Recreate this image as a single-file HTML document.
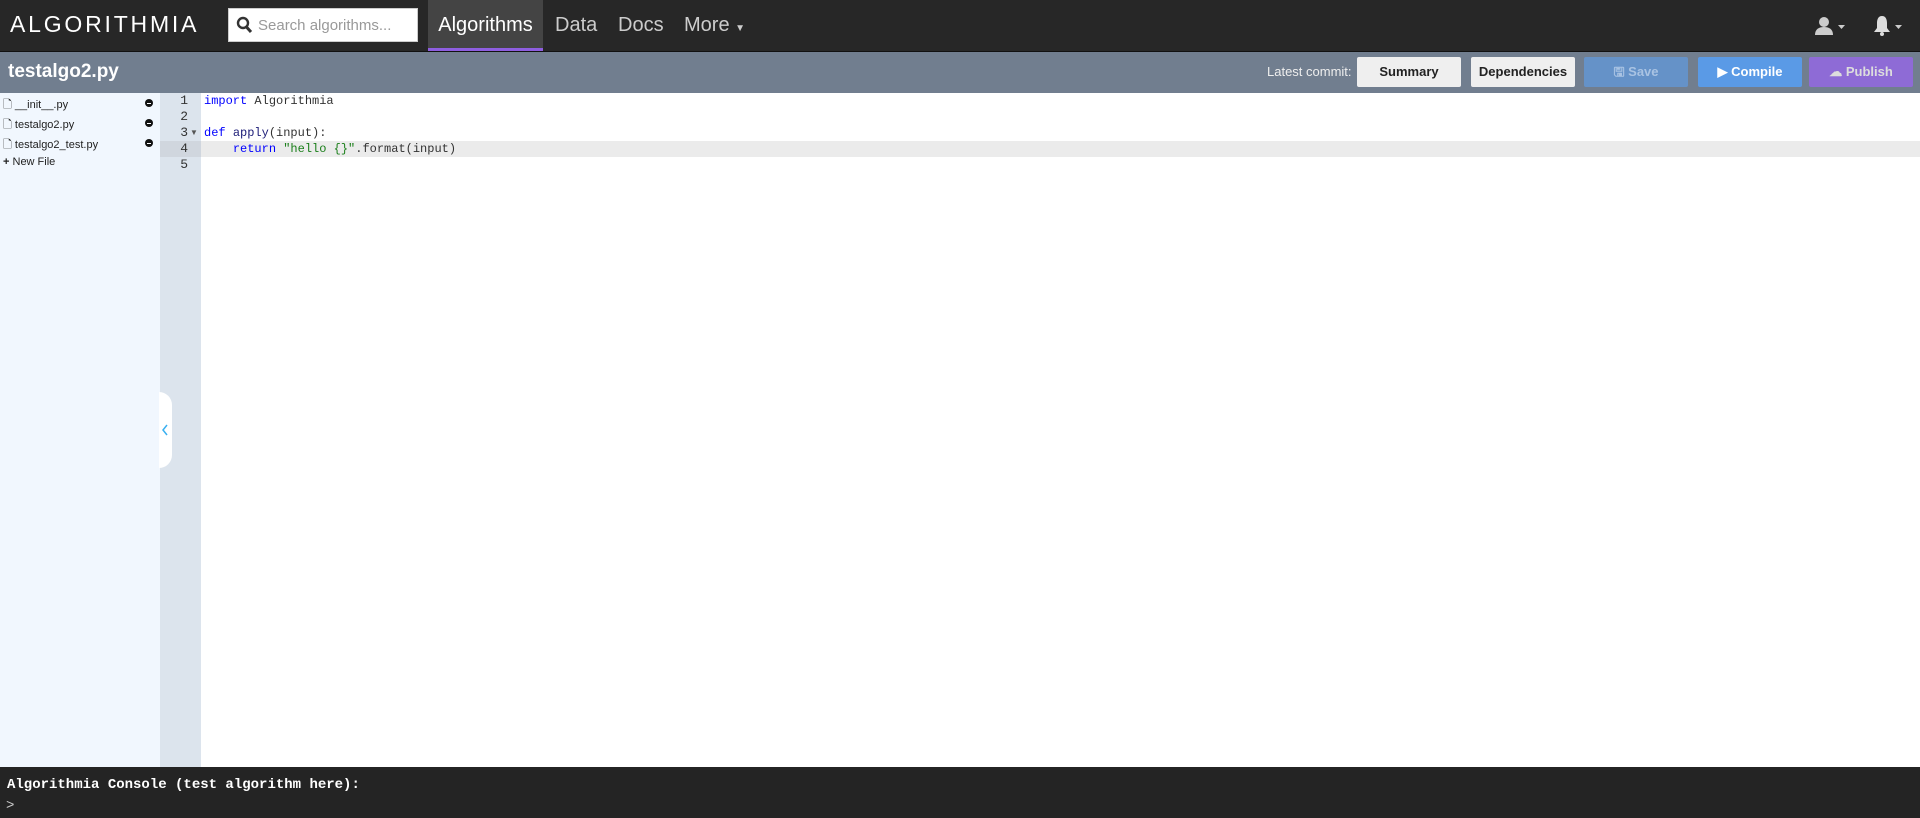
<!DOCTYPE html>
<html><head><meta charset="utf-8"><style>
*{box-sizing:border-box;margin:0;padding:0}
body{width:1920px;height:818px;overflow:hidden;font-family:"Liberation Sans",sans-serif;background:#fff;position:relative}
.nav{position:absolute;left:0;top:0;width:1920px;height:52px;background:#272727;border-bottom:1px solid #111}
.logo{position:absolute;left:10px;top:11px;color:#fff;font-size:23px;letter-spacing:2.8px;font-weight:normal}
.search{position:absolute;left:228px;top:8px;width:190px;height:34px;background:#fff;border:1px solid #ccc}
.search span{position:absolute;left:29px;top:8px;font-size:15px;color:#999}
.tab{position:absolute;top:0;height:51px;line-height:50px;color:#ccc;font-size:20px}
.sub{position:absolute;left:0;top:52px;width:1920px;height:41px;background:#717e8f}
.title{position:absolute;left:8px;top:9px;color:#fff;font-size:19px;font-weight:bold}
.btn{position:absolute;top:5px;height:30px;width:104px;line-height:30px;text-align:center;font-size:13px;font-weight:bold;border-radius:2px}
.side{position:absolute;left:0;top:93px;width:160px;height:674px;background:#f1f7fe}
.file{position:absolute;left:3px;font-size:11px;color:#222}
.gut{position:absolute;left:160px;top:93px;width:41px;height:674px;background:#dce4ed}
.code{position:absolute;left:201px;top:93px;right:0;height:674px;background:#fff}
.ln{position:absolute;left:160px;width:28px;text-align:right;font:13px "Liberation Mono",monospace;color:#333;line-height:16px}
.cl{position:absolute;left:204px;font:12px "Liberation Mono",monospace;color:#333;line-height:16px;white-space:pre;letter-spacing:0px}
.con{position:absolute;left:0;top:767px;width:1920px;height:51px;background:#242424;color:#fff;font:bold 14px "Liberation Mono",monospace}
.k{color:#00f}.s{color:#1a7f1a}.f{color:#20207a}
.dot{position:absolute;left:145px;width:8px;height:8px;border-radius:50%;background:#111}
.dot:after{content:"";position:absolute;left:2px;top:3.5px;width:4px;height:1px;background:#fff}
</style></head><body>
<div class="nav">
<div class="logo">ALGORITHMIA</div>
<div class="search"><svg style="position:absolute;left:7px;top:7px" width="17" height="18" viewBox="0 0 17 18"><circle cx="7" cy="7" r="5" fill="none" stroke="#333" stroke-width="2.4"/><path d="M10.5 11l4.5 5" stroke="#333" stroke-width="3"/></svg><span>Search algorithms...</span></div>
<div class="tab" style="left:428px;width:115px;background:#444;color:#fff;text-align:center;border-bottom:3px solid #8e5ee0">Algorithms</div>
<div class="tab" style="left:555px">Data</div>
<div class="tab" style="left:618px">Docs</div>
<div class="tab" style="left:684px">More <span style="font-size:10px">▼</span></div>
<svg style="position:absolute;left:1814px;top:16px" width="34" height="20" viewBox="0 0 34 20"><circle cx="10" cy="6" r="5" fill="#ccc"/><path d="M1 19c0-6 4-8 9-8s9 2 9 8z" fill="#ccc"/><path d="M24 9h7l-3.5 4z" fill="#ccc"/></svg>
<svg style="position:absolute;left:1873px;top:15px" width="32" height="22" viewBox="0 0 32 22"><path d="M9 1c-4 0-5 4-5 7v5l-3 4h16l-3-4V8c0-3-1-7-5-7z" fill="#ddd"/><circle cx="9" cy="19" r="2" fill="#ddd"/><path d="M22 10h7l-3.5 4z" fill="#ccc"/></svg>
</div>
<div class="sub">
<div class="title">testalgo2.py</div>
<div style="position:absolute;left:1267px;top:12px;color:#eee;font-size:13px">Latest commit:</div>
<div class="btn" style="left:1357px;background:#efefef;color:#222">Summary</div>
<div class="btn" style="left:1471px;background:#efefef;color:#222">Dependencies</div>
<div class="btn" style="left:1584px;background:#6592c8;color:#a9c3e3">🖫 Save</div>
<div class="btn" style="left:1698px;background:#5a9ae6;color:#fff">▶ Compile</div>
<div class="btn" style="left:1809px;background:#8e6bd6;color:#ddd">☁ Publish</div>
</div>
<div class="side">
<div class="file" style="top:3px">🗋 __init__.py</div>
<div class="file" style="top:23px">🗋 testalgo2.py</div>
<div class="file" style="top:43px">🗋 testalgo2_test.py</div>
<div class="file" style="top:63px"><b>+</b> New File</div>
<div class="dot" style="top:6px"></div>
<div class="dot" style="top:26px"></div>
<div class="dot" style="top:46px"></div>
</div>
<div class="gut"></div>
<div class="code"></div>
<div style="position:absolute;left:160px;top:141px;width:41px;height:16px;background:#d0d6de"></div>
<div style="position:absolute;left:201px;top:141px;right:0;height:16px;background:#ebebeb"></div>
<div style="position:absolute;left:159px;top:392px;width:13px;height:76px;border-radius:0 38px 38px 0/0 38px 38px 0;background:#fff"></div>
<svg style="position:absolute;left:161px;top:423px" width="8" height="14" viewBox="0 0 8 14"><path d="M6 2L2 7l4 5" fill="none" stroke="#3ab0f0" stroke-width="1.5"/></svg>
<div class="ln" style="top:93px">1</div><div class="ln" style="top:109px">2</div><div class="ln" style="top:125px">3</div><div class="ln" style="top:141px">4</div><div class="ln" style="top:157px">5</div>
<div style="position:absolute;left:190px;top:125px;font-size:8px;line-height:16px;color:#555">▼</div>
<div class="cl" style="top:93px"><span class="k">import</span> Algorithmia</div>
<div class="cl" style="top:125px"><span class="k">def</span> <span class="f">apply</span>(input):</div>
<div class="cl" style="top:141px">    <span class="k">return</span> <span class="s">"hello {}"</span>.format(input)</div>
<div class="con"><div style="position:absolute;left:7px;top:10px">Algorithmia Console (test algorithm here):</div><div style="position:absolute;left:6px;top:31px;font-weight:normal;color:#ccc">&gt;</div></div>
</body></html>
